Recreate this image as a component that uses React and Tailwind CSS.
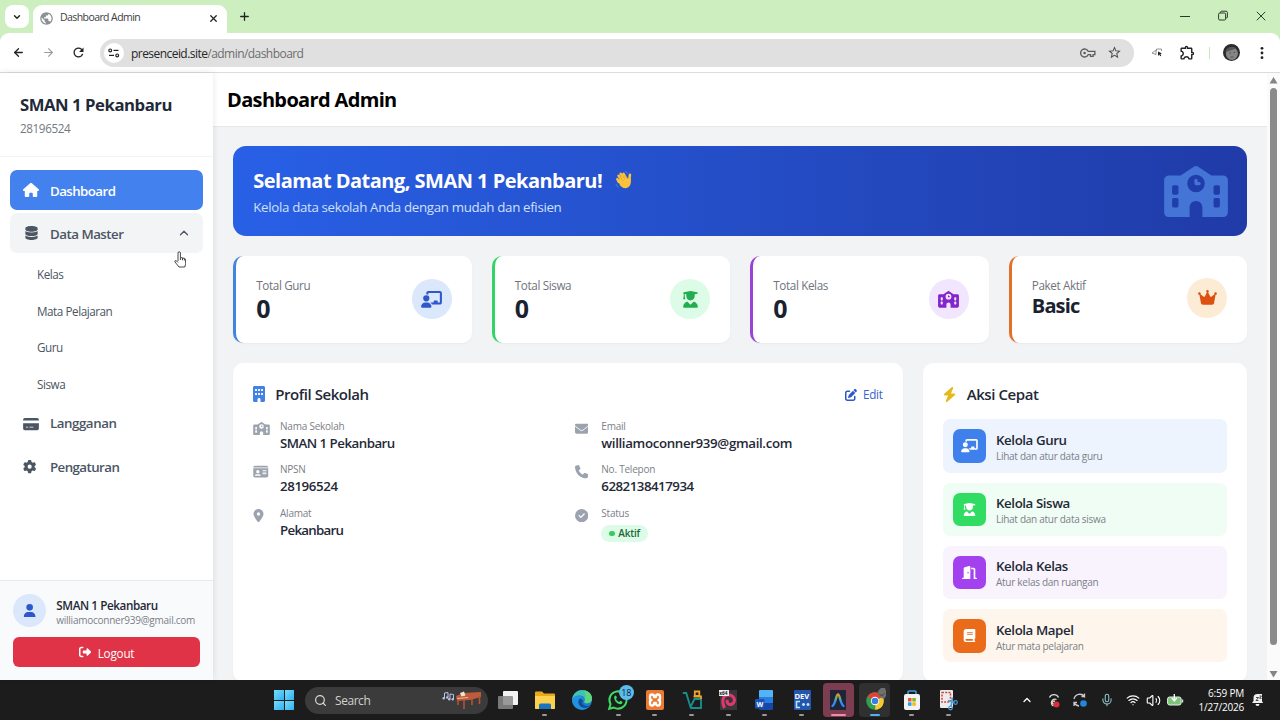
import React from 'react';
import {
  FaHouse, FaDatabase, FaCreditCard, FaGear, FaUser, FaRightFromBracket, FaSchool,
  FaChalkboardUser, FaUserGraduate, FaCrown, FaBuilding, FaIdCard, FaLocationDot,
  FaEnvelope, FaPhone, FaCircleCheck, FaPenToSquare, FaBolt, FaDoorOpen, FaBook,
} from 'react-icons/fa6';
import { ChevronUp, ChevronDown, X, Plus, ArrowLeft, ArrowRight, Search, Mic, Wifi, Volume2 } from 'lucide-react';
import { MdOutlineExtension, MdStarOutline, MdRefresh, MdPublic } from 'react-icons/md';

const stats = [
  { label: 'Total Guru', value: '0', icon: FaChalkboardUser, border: 'border-[#4285dc]', circle: 'bg-[#dbe8fb] text-[#2c58cc]', size: 'text-[25px] leading-[30px]' },
  { label: 'Total Siswa', value: '0', icon: FaUserGraduate, border: 'border-[#32d466]', circle: 'bg-[#dcfce7] text-[#22ad50]', size: 'text-[25px] leading-[30px]' },
  { label: 'Total Kelas', value: '0', icon: FaSchool, border: 'border-[#9a42d8]', circle: 'bg-[#f1e6fd] text-[#8424cb]', size: 'text-[25px] leading-[30px]' },
  { label: 'Paket Aktif', value: 'Basic', icon: FaCrown, border: 'border-[#e0702a]', circle: 'bg-[#fdecd5] text-[#dc5010]', size: 'text-[20px] leading-[26.7px] tracking-[-0.85px]' },
];

const profile = [
  { label: 'Nama Sekolah', value: 'SMAN 1 Pekanbaru', icon: FaSchool, iconWidth: 'w-[17px]', spacing: 'tracking-[-0.52px]' },
  { label: 'Email', value: 'williamoconner939@gmail.com', icon: FaEnvelope, iconWidth: 'w-[13.3px]', spacing: 'tracking-[-0.35px]' },
  { label: 'NPSN', value: '28196524', icon: FaIdCard, iconWidth: 'w-[15.5px]', spacing: 'tracking-[-0.4px]' },
  { label: 'No. Telepon', value: '6282138417934', icon: FaPhone, iconWidth: 'w-[13.3px]', spacing: 'tracking-[-0.5px]' },
  { label: 'Alamat', value: 'Pekanbaru', icon: FaLocationDot, iconWidth: 'w-[11px]', spacing: 'tracking-[-0.72px]' },
  { label: 'Status', badge: 'Aktif', icon: FaCircleCheck, iconWidth: 'w-[13.3px]' },
];

const actions = [
  { title: 'Kelola Guru', desc: 'Lihat dan atur data guru', icon: FaChalkboardUser, row: 'bg-[#edf4fd]', box: 'bg-[#4080ed]' },
  { title: 'Kelola Siswa', desc: 'Lihat dan atur data siswa', icon: FaUserGraduate, row: 'bg-[#f0fdf4]', box: 'bg-[#31dc62]' },
  { title: 'Kelola Kelas', desc: 'Atur kelas dan ruangan', icon: FaDoorOpen, row: 'bg-[#f9f3fd]', box: 'bg-[#a341ef]' },
  { title: 'Kelola Mapel', desc: 'Atur mata pelajaran', icon: FaBook, row: 'bg-[#fef6ec]', box: 'bg-[#ea6c1a]' },
];

const BrowserChrome = () => (
  <header className="shrink-0 bg-[#cdefc0]">
    <div className="flex h-[33px] items-end">
      <div className="mb-[5px] ml-[5px] flex h-[23px] w-6 items-center justify-center rounded-lg bg-white">
        <ChevronDown size={10} strokeWidth={3.4} />
      </div>
      <div className="ml-1 flex h-7 w-[194px] items-center rounded-t-[9px] bg-white pr-2 pb-[2px] pl-[6px]">
        <MdPublic className="size-[15px] text-[#8b9094]" />
        <span className="ml-[6px] flex-1 text-[10.5px] tracking-[-0.58px] text-[#3d3d3d]">Dashboard Admin</span>
        <X size={11} strokeWidth={2.8} />
      </div>
      <Plus size={13} strokeWidth={2.4} className="mb-[10px] ml-[11px]" />
      <div className="mr-[14px] mb-[11px] ml-auto flex items-center gap-7 text-[#2d382a]">
        <svg width="10" height="12" viewBox="0 0 10 12" stroke="currentColor"><path d="M0 6.500h10" /></svg>
        <svg width="10" height="12" viewBox="0 0 10 12" fill="none" stroke="currentColor">
          <rect x="0.6" y="3" width="7" height="7" rx="1.2" />
          <path d="M2.6 3V2.2a1 1 0 0 1 1-1h4.4a1.4 1.4 0 0 1 1.4 1.4v4.4a1 1 0 0 1-1 1h-.8" />
        </svg>
        <svg width="10" height="12" viewBox="0 0 10 12" stroke="currentColor"><path d="M.8 1.8l8.5 8.5M9.3 1.8L.8 10.3" /></svg>
      </div>
    </div>
    <div className="flex h-[40px] items-center rounded-t-[9px] border-b border-[#dcdcdc] bg-white">
      <ArrowLeft size={13} strokeWidth={2.4} className="ml-3" />
      <ArrowRight size={13} strokeWidth={2} className="ml-[17px] text-[#9a9a9a]" />
      <MdRefresh className="ml-[16px] size-[15px]" />
      <div className="ml-[14px] flex h-7 w-[1034px] items-center rounded-full bg-[#e0e0e0] pr-[12px] pl-1">
        <div className="flex size-5 items-center justify-center rounded-full bg-white">
          <svg width="12" height="10" viewBox="0 0 12 10" fill="none" stroke="#222" strokeWidth="1.2">
            <circle cx="2.2" cy="2.4" r="1.4" /><path d="M5.5 2.4h5" />
            <circle cx="9.2" cy="7.4" r="1.4" /><path d="M1 7.4h5" />
          </svg>
        </div>
        <span className="ml-[7px] flex-1 pt-[2px] text-[12px] tracking-[-0.55px] text-[#6d6d6d]">
          <span className="text-[#262626]">presenceid.site</span>/admin/dashboard
        </span>
        <svg width="16" height="10" viewBox="0 0 16 10" fill="none" stroke="#5c5c5c" strokeWidth="1.3">
          <path d="M8.300 3.400a4 4 0 1 0 0 3.200h2.200v1.800h2.600V6.600h1.800V3.400z" />
          <circle cx="4.600" cy="5" r="1.300" fill="#5c5c5c" stroke="none" />
        </svg>
        <MdStarOutline className="ml-[11px] size-[15px] text-[#4b4b4b]" />
      </div>
      <svg width="12" height="9" viewBox="0 0 12 9" className="ml-[17px]" fill="none" stroke="#8a8a8a" strokeWidth="0.9">
        <path d="M5 2.2L1 5l4 1.500M5 2.200V6.500M5.500 1h5v2M5.500 1v2" />
        <path d="M7 3.500l4 2-1.600.6.8 1.700-1 .400-.8-1.700L7 8z" fill="#222" stroke="none" />
      </svg>
      <MdOutlineExtension className="ml-[16px] size-[17px] text-[#222]" />
      <div className="ml-[13px] h-3 w-px bg-[#c9e5bd]" />
      <svg width="17" height="17" viewBox="0 0 17 17" className="ml-[13px]">
        <circle cx="8.500" cy="8.500" r="8.500" fill="#2b2b2b" />
        <ellipse cx="8.900" cy="9.500" rx="6" ry="6.500" fill="#858585" />
        <path d="M2.500 8C3 3 9 1.500 13 4.500L9.500 5.800z" fill="#555" />
        <path d="M6.500 9h1.500M10.500 8.500h1.500M7.500 13h3" stroke="#444" strokeWidth=".8" />
      </svg>
      <svg width="4" height="14" viewBox="0 0 4 14" className="ml-[20px]" fill="#222">
        <circle cx="2" cy="2.300" r="1.400" /><circle cx="2" cy="7" r="1.400" /><circle cx="2" cy="11.700" r="1.400" />
      </svg>
    </div>
  </header>
);

const Sidebar = () => (
  <aside className="relative z-10 flex w-[213px] shrink-0 flex-col bg-white shadow-[0_0_7px_rgba(0,0,0,0.1)]">
    <div className="h-[84px] border-b border-[#f4f4f5] px-5 pt-5">
      <h2 className="text-[16.7px] leading-[24px] font-bold tracking-[-0.45px] text-[#1f2937]">SMAN 1 Pekanbaru</h2>
      <p className="mt-[3px] text-[11.7px] leading-[16px] tracking-[-0.4px] text-[#74787f]">28196524</p>
    </div>
    <nav className="flex flex-1 flex-col gap-[3.4px] px-[10px] pt-[13px] text-[13.3px] font-semibold text-[#4b5563]">
      <a className="flex h-10 items-center rounded-[7px] bg-[#4281ee] pl-[13px] text-white">
        <FaHouse className="size-4" /><span className="ml-[11px] pt-[3px] tracking-[-0.57px]">Dashboard</span>
      </a>
      <a className="flex h-10 items-center rounded-[7px] bg-[#f3f4f6] pr-3 pl-[15px]">
        <FaDatabase className="h-[14px] w-[13px]" /><span className="ml-[12px] flex-1 pt-[3px] tracking-[-0.5px]">Data Master</span>
        <ChevronUp size={14} strokeWidth={2.2} />
      </a>
      <div className="flex flex-col gap-[3.3px] pl-[27px] text-[11.7px] font-normal tracking-[-0.45px]">
        {['Kelas', 'Mata Pelajaran', 'Guru', 'Siswa'].map((item) => (
          <a key={item} className="flex h-[33.4px] items-center pt-[2.500px]">{item}</a>
        ))}
      </div>
      <a className="flex h-10 items-center pl-[13px]">
        <FaCreditCard className="h-[14px] w-4" /><span className="ml-[11px] pt-px tracking-[-0.45px]">Langganan</span>
      </a>
      <a className="flex h-10 items-center pl-[13px]">
        <FaGear className="size-[13.3px]" /><span className="ml-[13.7px] pt-[2px] tracking-[-0.57px]">Pengaturan</span>
      </a>
    </nav>
    <div className="h-[100px] border-t border-[#e8e9ec] bg-[#f9fafb] px-[13px] pt-[13px]">
      <div className="flex items-center">
        <div className="flex size-[33.3px] items-center justify-center rounded-full bg-[#dbe8fb]">
          <FaUser className="size-[13.3px] text-[#2c58cc]" />
        </div>
        <div className="ml-[10px] pt-[2px]">
          <p className="text-[11.7px] leading-[16px] font-semibold tracking-[-0.42px] text-[#1f2937]">SMAN 1 Pekanbaru</p>
          <p className="text-[10px] leading-[14px] tracking-[-0.25px] text-[#7b8088]">williamoconner939@gmail.com</p>
        </div>
      </div>
      <button className="mt-[10px] flex h-[30px] w-[187px] items-center justify-center rounded-[6px] bg-[#e03347] text-[11.7px] text-white">
        <FaRightFromBracket className="size-3" /><span className="ml-[7px] pt-[2px] tracking-[-0.2px]">Logout</span>
      </button>
    </div>
  </aside>
);

const WaveHand = () => (
  <svg width="17" height="20" viewBox="0 0 18 20" className="ml-[13px]">
    <g fill="none" stroke="#fbc23c" strokeWidth="2.700" strokeLinecap="round">
      <path d="M8 11L3.800 5.500M10 9.500L6 3.500M12 8.500L9 3.500M4 12L2.500 9M15 11l.8-6.500" />
    </g>
    <path d="M3 10l8-4 3 3 2.500-1c.8 5 .2 8-2.500 9.800-3.500 2.200-7 .2-9-2.800z" fill="#fbc23c" />
    <path d="M10.500 1.200c1.500.3 2.500 1 3 2.300M1 14c.3 1.800 1.200 3 2.800 3.800" fill="none" stroke="#3d8bd6" strokeWidth="1" />
    <path d="M5 6.500l3.500 4.500M7.500 5l3.300 4.500M10.300 5l2.200 3.600" stroke="#e09a26" strokeWidth=".6" />
  </svg>
);

const Banner = () => (
  <section className="flex h-[90px] shrink-0 items-center rounded-[13px] bg-gradient-to-r from-[#2860e6] to-[#203ba8] pr-[19px] pl-5">
    <div className="flex-1 pt-px">
      <div className="flex items-center">
        <h2 className="text-[20px] leading-[27px] font-bold tracking-[-0.52px] text-white">Selamat Datang, SMAN 1 Pekanbaru!</h2>
        <WaveHand />
      </div>
      <p className="mt-[3px] text-[13.3px] leading-[20px] tracking-[-0.33px] text-[#cfe0fb]">Kelola data sekolah Anda dengan mudah dan efisien</p>
    </div>
    <FaSchool className="h-[51px] w-[64px] text-[#4474d6]" />
  </section>
);

const Content = () => (
  <main className="flex min-w-0 flex-1 flex-col bg-[#f2f3f5]">
    <div className="h-[54px] shrink-0 border-b border-[#e6e7e9] bg-white pl-[14px]">
      <h1 className="text-[20px] leading-[54px] font-bold tracking-[-0.65px] text-black">Dashboard Admin</h1>
    </div>
    <div className="flex min-h-0 flex-1 flex-col pt-[19px] pr-[19.7px] pl-[20.3px]">
      <Banner />
      <div className="mt-5 grid grid-cols-4 gap-5">
        {stats.map(({ label, value, icon: Icon, border, circle, size }) => (
          <div key={label} className={`flex h-[87px] items-start justify-between rounded-[10px] border-l-[3.500px] bg-white py-5 pr-5 pl-[20px] shadow-[0_1px_2px_rgba(0,0,0,0.04)] ${border}`}>
            <div>
              <p className="pt-[2px] text-[11.7px] leading-[15.7px] tracking-[-0.38px] text-[#6f747c]">{label}</p>
              <p className={`-mt-px font-bold text-[#1a2230] ${size}`}>{value}</p>
            </div>
            <div className={`flex size-10 items-center justify-center rounded-full ${value === '0' ? 'mt-[3.300px]' : 'mt-[1.700px]'} ${circle}`}>
              <Icon className="h-[16.700px] w-[21px]" />
            </div>
          </div>
        ))}
      </div>
      <div className="mt-[19.500px] grid min-h-0 flex-1 grid-cols-3 gap-5">
        <section className="col-span-2 rounded-[10px] bg-white p-5 shadow-[0_1px_2px_rgba(0,0,0,0.04)]">
          <div className="flex h-[23.300px] items-center">
            <FaBuilding className="h-[16px] w-3 text-[#4281e6]" />
            <h3 className="ml-[10px] flex-1 text-[15px] font-semibold tracking-[-0.45px] text-[#1f2937]">Profil Sekolah</h3>
            <FaPenToSquare className="mt-px size-3 text-[#2c58cc]" />
            <span className="ml-[6.500px] pt-[2px] text-[11.7px] tracking-[-0.3px] text-[#3a63cc]">Edit</span>
          </div>
          <div className="mt-[14px] grid grid-cols-2 gap-x-[13.3px] gap-y-[10px]">
            {profile.map(({ label, value, badge, icon: Icon, iconWidth, spacing }) => (
              <div key={label} className="flex h-[33.4px]">
                <div className="w-[26.700px] pt-[2.300px]"><Icon className={`h-[13.300px] text-[#9ca3af] ${iconWidth}`} /></div>
                <div>
                  <p className="text-[10px] leading-[13.300px] tracking-[-0.22px] text-[#7b8088]">{label}</p>
                  {value && <p className={`text-[13.300px] leading-[20px] font-semibold text-[#1f2937] ${spacing}`}>{value}</p>}
                  {badge && (
                    <span className="mt-[5px] flex h-[17px] w-[47px] items-center rounded-full bg-[#dcfce7] pl-2 text-[10px] font-semibold tracking-[-0.2px] text-[#1d6638]">
                      <span className="mr-[3.500px] size-[5.500px] rounded-full bg-[#3ac964]" />{badge}
                    </span>
                  )}
                </div>
              </div>
            ))}
          </div>
        </section>
        <section className="rounded-[10px] bg-white p-5 shadow-[0_1px_2px_rgba(0,0,0,0.04)]">
          <div className="flex h-[23.300px] items-center">
            <FaBolt className="h-[15px] w-[13px] text-[#e3b91b]" />
            <h3 className="ml-[11px] text-[15px] font-semibold tracking-[-0.42px] text-[#1f2937]">Aksi Cepat</h3>
          </div>
          <div className="mt-[13.500px] flex flex-col gap-[10px]">
            {actions.map(({ title, desc, icon: Icon, row, box }) => (
              <a key={title} className={`flex h-[53.3px] items-center rounded-[7px] px-[10px] ${row}`}>
                <div className={`flex size-[33.4px] items-center justify-center rounded-[7px] text-white ${box}`}>
                  <Icon className="h-[13.300px] w-[17px]" />
                </div>
                <div className="ml-[10px] pt-px">
                  <p className="text-[13.300px] leading-[20px] font-semibold tracking-[-0.420px] text-[#1f2937]">{title}</p>
                  <p className="text-[10px] leading-[13.300px] tracking-[-0.28px] text-[#7b8088]">{desc}</p>
                </div>
              </a>
            ))}
          </div>
        </section>
      </div>
    </div>
  </main>
);

const Scrollbar = () => (
  <div className="flex w-[13px] shrink-0 flex-col items-center bg-[#fbfbfb] pt-[4px] pb-[2px]">
    <svg width="9" height="7" viewBox="0 0 9 7" fill="#858585"><path d="M4.500 0L8.500 6.500H.5z" /></svg>
    <div className="mt-[4px] h-[557px] w-[7.500px] rounded-full bg-[#8a8a8a]" />
    <svg width="9" height="7" viewBox="0 0 9 7" fill="#858585" className="mt-auto"><path d="M4.500 6.500L8.500 0H.5z" /></svg>
  </div>
);

const taskIcons = [
  // task view
  <><rect x="5" y="1" width="15" height="14" rx="1" fill="#f2f2f2" /><rect x="0" y="6" width="15" height="13" rx="1" fill="#8a8a8a" opacity=".85" /></>,
  // explorer
  <><path d="M0 2.500a1 1 0 0 1 1-1h6l2 2h10a1 1 0 0 1 1 1V18a1 1 0 0 1-1 1H1a1 1 0 0 1-1-1z" fill="#e8a91c" /><path d="M0 6h20v12a1 1 0 0 1-1 1H1a1 1 0 0 1-1-1z" fill="#fbd14f" /><path d="M4 19v-4a1.500 1.500 0 0 1 1.500-1.500h9A1.500 1.500 0 0 1 16 15v4z" fill="#1976be" /></>,
  // edge
  <><circle cx="10" cy="10" r="10" fill="#1b78cf" /><path d="M0 9.500C.8 4 5 0 10 0c6 0 10 4 10 8.500 0 3-2 4.800-5 4.800-2 0-3-.8-2.500-1.800C13.500 9 12 5.500 8 5.500 4 5.500 1 7.500 0 9.500z" fill="#3fc3b0" /><path d="M12 .2c5 1 8 4.300 8 8.300 0 3-2 4.800-5 4.800-2 0-3-.8-2.500-1.800 1-3 2-7-.5-11.300z" fill="#5fd67c" /><path d="M0 10c2-5 8-6 11-2.500 1 1.500.8 3-.3 4-1.700 3.500 2.300 6 7.300 4.500C13 22 1 21 0 10z" fill="#2292de" /><path d="M8 8.500c-3.500 3-1 8.500 3.500 9.300 2.500.4 5-.4 6.800-2C13.500 17 9 14.500 10.700 11.500c.5-1-.7-3-2.700-3z" fill="#0e4d98" /></>,
  // whatsapp
  <><path d="M1.200 18.800L2.500 14.200A8.600 8.600 0 1 1 5.800 17.500z" fill="none" stroke="#3ddb62" strokeWidth="2" /><path d="M6.500 6c.8-1 1.800-.5 2 .5l.4 1.200-.9 1.300c.8 1.500 1.800 2.400 3.200 3l1.200-1.200 1.900 1c.5.6 0 2-1.500 2.400C9 14.500 5 9.500 6.500 6z" fill="#3ddb62" /></>,
  // xampp
  <><rect x="1" y="0" width="18" height="20" rx="2" fill="#ec7a32" /><path d="M5 9V6.500a2 2 0 0 1 4 0V7h2v-.5a2 2 0 0 1 4 0V9l-1.500 1 1.500 1v2.500a2 2 0 0 1-4 0V13H9v.5a2 2 0 0 1-4 0V11l1.500-1z" fill="none" stroke="#fff" strokeWidth="2.300" strokeLinejoin="round" /></>,
  // V box
  <><path d="M.8 3h3.400l4.300 14L12.500 9H19M16 9h3v9H9" fill="none" stroke="#168e8e" strokeWidth="1.900" /><path d="M12.800 1.500h4.500V6h-4.500zM11.500 6.500H19V9" fill="none" stroke="#f0a32a" strokeWidth="1.800" /></>,
  // debian x64
  <><rect x="2" y="0" width="17" height="20" fill="#39353a" /><path d="M6.500 18C3.500 12 4.500 5 10 5c6-.3 8 5.500 5 8.500-3 2.500-7 0-5.500-3.500" fill="none" stroke="#e0386c" strokeWidth="3" /><rect x="1" y="0" width="10" height="6" fill="#eee" /><text x="1.300" y="5" fontSize="4.800" fontWeight="700" fill="#222">x64</text></>,
  // word
  <><rect x="4" y="0" width="14" height="7.500" rx="1" fill="#52b4f4" /><rect x="4" y="7" width="14" height="6" fill="#2a7de0" /><rect x="4" y="13" width="14" height="7" rx="1" fill="#1546a8" /><rect x="0" y="9" width="9.500" height="9.500" rx="1" fill="#1c52b8" /><text x="1.400" y="16.500" fontSize="7" fontWeight="700" fill="#fff">W</text></>,
  // dev-c++
  <><rect x="2" y="0" width="17" height="20" rx="1" fill="#2456ae" /><text x="2.500" y="9" fontSize="7.600" fontWeight="700" fill="#fff">DEV</text><path d="M8 11.500H4.500v6H8M10 14.500h3M11.500 13v3M14.500 14.500h3M16 13v3" fill="none" stroke="#b9e2ff" strokeWidth="1.600" /></>,
  // rainbow arch
  <><rect x="2" y="0" width="16" height="20" fill="#1d2536" /><path d="M4.500 16C8 13 8 4.500 10 4.500s2 8.500 5.500 11.500" fill="none" stroke="url(#arch)" strokeWidth="2.300" strokeLinecap="round" /><linearGradient id="arch" x1="0" x2="0" y1="0" y2="1"><stop offset="0" stopColor="#f08a3a" /><stop offset=".35" stopColor="#5fb57a" /><stop offset=".7" stopColor="#3b86f6" /></linearGradient></>,
  // chrome
  <><circle cx="10" cy="11" r="8.800" fill="#2f9e4d" /><path d="M2.400 6.600a8.800 8.800 0 0 1 15.200 0L10 11z" fill="#e24233" /><path d="M17.600 6.600A8.800 8.800 0 0 1 10 19.800l1-9z" fill="#f8c831" /><circle cx="10" cy="11" r="4.200" fill="#fff" /><circle cx="10" cy="11" r="3.300" fill="#3c7de0" /><path d="M13 1l3-3h4l1 3v5l-2 3-5-2z" fill="#6f6f6f" /><path d="M14.500 4.500c2 1.500 3 1 5-1" stroke="#444" fill="none" /></>,
  // store
  <><path d="M6 4V2a1 1 0 0 1 1-1h6a1 1 0 0 1 1 1v2" fill="none" stroke="#3c9fe0" strokeWidth="1.600" /><rect x="2" y="4" width="16" height="16" rx="2" fill="#f3f3f3" /><path d="M6 8h3.500v3.500H6z" fill="#f0532d" /><path d="M10.300 8h3.500v3.500h-3.500z" fill="#7ab829" /><path d="M6 12.300h3.500v3.500H6z" fill="#25a3ea" /><path d="M10.300 12.300h3.500v3.500h-3.500z" fill="#f9b912" /></>,
  // snipping tool
  <><rect x="2" y="0" width="13" height="18" rx="1" fill="#ececec" /><rect x="4" y="2.500" width="8.500" height="9.500" fill="none" stroke="#d6453c" strokeWidth="1.500" strokeDasharray="2 1.200" /><path d="M14.500 7.500l-1.500 9M10 10.500l6.500 2" stroke="#4c9ed8" strokeWidth="1.600" /><circle cx="17.500" cy="12.500" r="1.800" fill="none" stroke="#4c9ed8" strokeWidth="1.200" /><circle cx="12.500" cy="18" r="1.800" fill="none" stroke="#4c9ed8" strokeWidth="1.200" /></>,
];

const slotStyle = (i) => (i === 9 ? 'bg-[#7d3d50] rounded-[4px]' : i === 10 ? 'bg-[#303030] rounded-[4px]' : '');
const markStyle = (i) => {
  if (i === 0 || i === 2) return 'bg-transparent w-[5px]';
  if (i === 9) return 'bg-[#f28ca6] w-[15px]';
  if (i === 10) return 'bg-[#4db4ec] w-[10px]';
  return 'bg-[#989898] w-[5px]';
};

const Taskbar = () => (
  <footer className="flex h-10 shrink-0 items-center bg-[#1c1c1c] text-white">
    <div className="ml-[274px] grid grid-cols-2 gap-[1px]">
      {[0, 1, 2, 3].map((i) => <span key={i} className="size-[9.500px] bg-gradient-to-br from-[#74dcfa] to-[#2fb0ef]" />)}
    </div>
    <div className="ml-[11px] flex h-[27px] w-[183px] items-center rounded-full bg-[#3b3b3b] pr-[6px] pl-[9px]">
      <Search size={13} strokeWidth={2.2} className="text-[#dcdcdc]" />
      <span className="ml-2 flex-1 pt-px text-[12px] tracking-[-0.45px] text-[#d0d0d0]">Search</span>
      <svg width="40" height="20" viewBox="0 0 40 20">
        <path d="M2.500 8V3l3.500-.5V7M8 9V4l3.500.5V9" stroke="#b9c3ea" fill="none" />
        <circle cx="1.700" cy="8.300" r="1.200" fill="#b9c3ea" /><circle cx="5.200" cy="7.500" r="1.200" fill="#b9c3ea" />
        <circle cx="7.200" cy="9.300" r="1.200" fill="#b9c3ea" /><circle cx="10.700" cy="9.300" r="1.200" fill="#b9c3ea" />
        <path d="M14 6l7-3 18-1v5l-11 3-13 1z" fill="#bf5b3a" />
        <path d="M16 10v5M22 10v9M30 9v6M37.500 6v8" stroke="#b55334" strokeWidth="1.600" />
        <path d="M18 3l4-1.500 1.500 4-4 1z" fill="#f0e6cc" />
        <path d="M15 8.500l11-1" stroke="#f3d7c4" strokeWidth=".8" />
      </svg>
    </div>
    <div className="ml-[2px] flex">
      {taskIcons.map((icon, i) => (
        <div key={i} className="flex w-[36.670px] justify-center">
          <div className={`relative flex h-[34px] w-[31px] flex-col items-center pt-[7px] ${slotStyle(i)}`}>
            <svg width="20" height="20" viewBox="0 0 20 20" className="shrink-0 overflow-visible">{icon}</svg>
            <span className={`mt-[4px] h-[2px] shrink-0 rounded-full ${markStyle(i)}`} />
            {i === 3 && (
              <span className="absolute top-[2px] right-0 flex size-[15px] items-center justify-center rounded-full bg-[#5bbdee] text-[9px] tracking-[-0.2px] text-[#10222e]">18</span>
            )}
          </div>
        </div>
      ))}
    </div>
    <div className="mr-[16px] ml-auto flex items-center">
      <ChevronUp size={12} strokeWidth={2.6} />
      <svg width="12" height="15" viewBox="0 0 12 15" className="ml-[15px] overflow-visible" fill="none" stroke="#ddd" strokeWidth="1.300">
        <path d="M1.500 4.500a5 5 0 0 1 9 0M8.500 6.500a3.500 3.500 0 1 0-3 6.500" /><path d="M7 8.500a1.500 1.500 0 1 0-1 2.500" /><circle cx="8.500" cy="11.500" r="3" fill="#e22b35" stroke="none" />
      </svg>
      <svg width="14" height="14" viewBox="0 0 14 14" className="ml-[13px] overflow-visible" fill="none" stroke="#ccc" strokeWidth="1.300">
        <path d="M1 6a6 6 0 0 1 10.500-2.500V.5M11.500 3.500H8.500M1 13v-3.500h3M1 9.500A6 6 0 0 0 6 13" /><circle cx="10.500" cy="10.500" r="3.300" fill="#2286dc" stroke="none" />
      </svg>
      <Mic size={14} strokeWidth={1.800} className="ml-[13px] text-[#8fc4cf]" />
      <Wifi size={14} strokeWidth={2} className="ml-[12px]" />
      <Volume2 size={15} strokeWidth={1.800} className="ml-[6px]" />
      <svg width="17" height="12" viewBox="0 0 17 12" className="ml-[6px]">
        <rect x=".6" y="3" width="13.500" height="8" rx="2" fill="#7bc67a" stroke="#e4f4e2" /><path d="M15.500 5.500v3" stroke="#ddd" strokeWidth="1.400" /><path d="M7.300 0v6M4.800 4l2.500 3 2.500-3" stroke="#fff" fill="none" strokeWidth="1.300" />
      </svg>
      <div className="ml-[10px] w-[50px] pt-px text-right text-[10px] leading-[13.600px] tracking-[-0.200px] whitespace-nowrap">
        <p>6:59 PM</p>
        <p>1/27/2026</p>
      </div>
      <svg width="13" height="14" viewBox="0 0 13 14" className="ml-[7px]">
        <path d="M1 10l1.500-2V5a4 4 0 0 1 4-4h4.500v7l1 2zM4.500 11h4a2 2 0 0 1-4 0z" fill="#f0f0f0" /><path d="M5 4.500h2.500L5 7.500h2.500M8.500 3h2l-2 2.300h2" stroke="#222" fill="none" strokeWidth=".8" />
      </svg>
    </div>
  </footer>
);

export default function App() {
  return (
    <div className="relative flex h-[720px] w-[1280px] flex-col overflow-hidden bg-white font-['Open_Sans','Noto_Sans',sans-serif] text-[#222]">
      <BrowserChrome />
      <div className="flex min-h-0 flex-1">
        <Sidebar />
        <Content />
        <Scrollbar />
      </div>
      <Taskbar />
      {/* hand cursor */}
      <svg width="12" height="17" viewBox="0 0 12 17" className="absolute top-[251px] left-[174px] z-20">
        <path d="M4 10V2a1.200 1.200 0 0 1 2.400 0v4.500l4 .9q1.200.3 1.200 1.500v3.500q0 1-.8 3.600H5L1 11q-.6-1.400.6-1.500 1 0 2.400 2M6.400 6.500V9M8.500 7v2.300M10.400 7.500v2" fill="#fff" stroke="#333" strokeWidth=".9" />
      </svg>
    </div>
  );
}
